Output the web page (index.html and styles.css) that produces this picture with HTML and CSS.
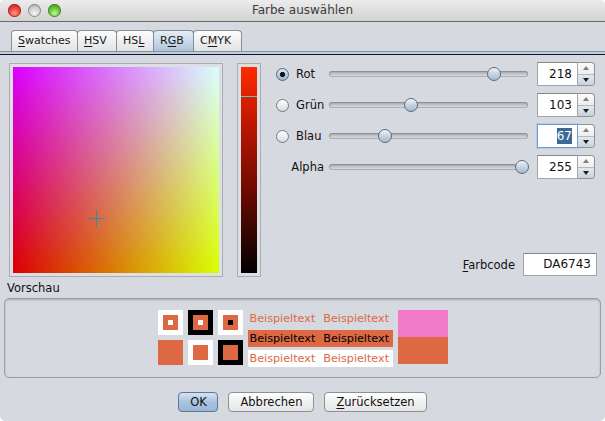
FILE: index.html
```html
<!DOCTYPE html>
<html>
<head>
<meta charset="utf-8">
<link rel="stylesheet" href="styles.css">
</head>
<body>
<div class="window">
  <div class="titlebar">
    <div class="lights">
      <span class="light red"></span>
      <span class="light gray"></span>
      <span class="light green"></span>
    </div>
    <div class="title">Farbe auswählen</div>
  </div>
  <div class="tabs">
    <div class="tab"><u>S</u>watches</div>
    <div class="tab"><u>H</u>SV</div>
    <div class="tab">HS<u>L</u></div>
    <div class="tab active">R<u>G</u>B</div>
    <div class="tab">C<u>M</u>YK</div>
  </div>
  <div class="band"></div>
  <div class="content">
    <div class="top">
      <div class="planebox">
        <div class="plane">
          <span class="cross-h"></span>
          <span class="cross-v"></span>
        </div>
      </div>
      <div class="barbox">
        <div class="bar"><span class="marker"></span></div>
      </div>
      <div class="controls">
        <div class="rows">
          <div class="row">
            <div class="sel"><span class="radio on"></span><span class="lbl">Rot</span></div>
            <div class="track"><span class="thumb" style="left:165px"></span></div>
            <div class="num">218</div>
            <div class="spin"><span class="up"></span><span class="down"></span></div>
          </div>
          <div class="row">
            <div class="sel"><span class="radio"></span><span class="lbl">Grün</span></div>
            <div class="track"><span class="thumb" style="left:82px"></span></div>
            <div class="num">103</div>
            <div class="spin"><span class="up"></span><span class="down"></span></div>
          </div>
          <div class="row">
            <div class="sel"><span class="radio"></span><span class="lbl">Blau</span></div>
            <div class="track"><span class="thumb" style="left:56px"></span></div>
            <div class="num focus"><span class="hl">67</span></div>
            <div class="spin"><span class="up"></span><span class="down"></span></div>
          </div>
          <div class="row">
            <div class="sel alpha"><span class="lbl">Alpha</span></div>
            <div class="track"><span class="thumb" style="left:193px"></span></div>
            <div class="num">255</div>
            <div class="spin"><span class="up"></span><span class="down"></span></div>
          </div>
        </div>
        <div class="code">
          <span class="codelbl"><u>F</u>arbcode</span>
          <div class="codefield">DA6743</div>
        </div>
      </div>
    </div>
    <div class="vlabel">Vorschau</div>
    <div class="preview">
      <div class="squares">
        <div class="sq white"><div class="in"><div class="dot white"></div></div></div>
        <div class="sq black"><div class="in"><div class="dot white"></div></div></div>
        <div class="sq white"><div class="in"><div class="dot black"></div></div></div>
        <div class="sq orange"></div>
        <div class="sq white"><div class="in"></div></div>
        <div class="sq black"><div class="in"></div></div>
      </div>
      <div class="texts">
        <div class="trow plain"><span>Beispieltext</span><span>Beispieltext</span></div>
        <div class="trow onorange"><span>Beispieltext</span><span>Beispieltext</span></div>
        <div class="trow onwhite"><span>Beispieltext</span><span>Beispieltext</span></div>
      </div>
      <div class="swatch">
        <div class="old"></div>
        <div class="new"></div>
      </div>
    </div>
    <div class="buttons">
      <div class="btn default">OK</div>
      <div class="btn">Abbrechen</div>
      <div class="btn"><u>Z</u>urücksetzen</div>
    </div>
  </div>
</div>
</body>
</html>
```

FILE: styles.css
```css
* { box-sizing: border-box; }
html, body { margin: 0; padding: 0; background: #ffffff; }
body {
  font-family: "DejaVu Sans", "Liberation Sans", sans-serif;
  font-size: 11.5px;
  color: #111;
}
.window {
  width: 605px;
  height: 421px;
  background: #d6d9e0;
  border-radius: 5px;
  overflow: hidden;
  display: flex;
  flex-direction: column;
}
u { text-decoration: underline; text-underline-offset: 2px; text-decoration-thickness: 1px; }

/* title bar */
.titlebar {
  height: 22px;
  flex: none;
  border-bottom: 1px solid #6a6a6a;
  background: linear-gradient(#ececec, #d2d2d2);
  position: relative;
  display: flex;
  align-items: center;
}
.lights { display: flex; gap: 7px; padding-left: 8px; }
.light {
  width: 13px; height: 13px; border-radius: 50%;
  display: block;
}
.light.red { background: radial-gradient(circle at 50% 70%, #ff9a8e 0, #f2453c 45%, #b8160f 100%); box-shadow: inset 0 0 0 1px #a3322b; }
.light.gray { background: radial-gradient(circle at 50% 70%, #f4f4f4 0, #cfcfcf 50%, #9e9e9e 100%); box-shadow: inset 0 0 0 1px #8e8e8e; }
.light.green { background: radial-gradient(circle at 50% 70%, #c5f59a 0, #6bc63a 45%, #2f8a14 100%); box-shadow: inset 0 0 0 1px #4a8a30; }
.title {
  position: absolute;
  left: 0; right: 0; top: 0; bottom: 0;
  text-align: center;
  font-size: 12px;
  line-height: 21px;
  color: #3c3c3c;
  pointer-events: none;
}

/* tabs */
.tabs {
  height: 30px;
  flex: none;
  padding: 8px 0 0 11px;
  display: flex;
  border-bottom: 1px solid #8c9096;
}
.tab {
  height: 21px;
  border: 1px solid #8e8e8e;
  border-bottom: none;
  border-radius: 4px 4px 0 0;
  background: linear-gradient(#fdfdfd, #e2e3e5);
  font-size: 11px;
  line-height: 20px;
  padding: 0 6px;
  margin-right: -1px;
  color: #1a1a1a;
}
.tab:nth-child(1) { width: 67px; }
.tab:nth-child(2) { width: 40px; }
.tab:nth-child(3) { width: 38px; }
.tab:nth-child(4) { width: 41px; }
.tab:nth-child(5) { width: 49px; }
.tab.active {
  background: linear-gradient(#e6eef6, #aec3d9);
  border-color: #7d8c9c;
  position: relative;
  z-index: 1;
}
.band {
  height: 3px;
  flex: none;
  background: #bcd0e5;
  border-bottom: 1px solid #121626;
}

/* content */
.content { flex: 1; display: flex; flex-direction: column; }
.top {
  display: flex;
  padding: 7px 8px 0 9px;
  height: 222px;
}
.planebox {
  margin-top: 1px;
  width: 214px; height: 214px;
  border: 1px solid #a9acb0;
  padding: 3px;
  background: #dcdfe4;
}
.plane {
  width: 206px; height: 206px;
  position: relative;
  background:
    linear-gradient(to right, #000000, #00ff00),
    linear-gradient(to bottom, #0000ff, #000000),
    #da0000;
  background-blend-mode: screen;
}
.cross-h {
  position: absolute; left: 75px; top: 151px;
  width: 17px; height: 1px; background: #2f8f9e;
}
.cross-v {
  position: absolute; left: 83px; top: 143px;
  width: 1px; height: 17px; background: #2f8f9e;
}
.barbox {
  margin: 1px 0 0 14px;
  width: 24px; height: 214px;
  border: 1px solid #a9acb0;
  padding: 3px;
  background: #dcdfe4;
}
.bar {
  width: 16px; height: 206px;
  position: relative;
  background: linear-gradient(#ff2a00, #c41800 25%, #7a0c00 55%, #000000);
}
.marker {
  position: absolute; left: 0; right: 0; top: 29px;
  height: 1px; background: #5cc4cc;
}
.controls {
  flex: 1;
  margin-left: 9px;
  display: flex;
  flex-direction: column;
  justify-content: space-between;
  padding-bottom: 1px;
}
.rows { display: flex; flex-direction: column; gap: 7px; }
.row { display: flex; align-items: center; height: 24px; }
.sel { width: 59px; display: flex; align-items: center; flex: none; }
.sel.alpha { justify-content: flex-end; padding-right: 5px; }
.lbl { font-size: 11.5px; }
.radio {
  width: 13px; height: 13px; border-radius: 50%;
  margin: 0 7px 0 6px;
  border: 1px solid #777a7e;
  background: linear-gradient(#ffffff, #d9dadc);
  flex: none;
}
.radio.on {
  border-color: #56687a;
  background:
    radial-gradient(circle, #151515 0, #151515 2.3px, transparent 2.9px),
    linear-gradient(#dde7f1, #9db4cb);
}
.track { width: 199px; height: 24px; position: relative; flex: none; }
.track::before {
  content: "";
  position: absolute; left: 0; right: 0; top: 9px;
  height: 6px; border-radius: 3px;
  background: linear-gradient(#9da1a7, #c9ccd1 60%, #e1e3e6);
  box-shadow: inset 0 0 0 1px rgba(110,115,122,0.45);
}
.thumb {
  position: absolute; top: 5px;
  width: 14px; height: 14px; margin-left: -7px;
  border-radius: 50%;
  border: 1px solid #5b6b7c;
  background: linear-gradient(#eef3f8, #c5d3e1 50%, #a7bacd);
}
.num {
  margin-left: 9px;
  width: 41px; height: 24px; flex: none;
  border: 1px solid #a3a5a8;
  border-top-color: #868889;
  background: #ffffff;
  text-align: right;
  padding-right: 5px;
  font-size: 12px;
  line-height: 22px;
}
.num.focus {
  border-color: #6f9bd0;
  box-shadow: 0 0 0 1px #b3cbe6;
}
.hl { background: #3c6a96; color: #ffffff; padding: 1px 0; }
.spin {
  width: 17px; height: 24px; flex: none;
  border: 1px solid #8f9296;
  border-left: none;
  border-radius: 0 4px 4px 0;
  background: linear-gradient(#fbfbfb, #dfe0e2);
  display: flex; flex-direction: column;
}
.spin span { flex: 1; display: flex; align-items: center; justify-content: center; }
.spin .up { border-bottom: 1px solid #b6b8bb; }
.spin .down { background: linear-gradient(#e4e9ef, #c8d1db); border-radius: 0 0 3px 0; }
.spin .up::before {
  content: ""; width: 0; height: 0;
  border-left: 3px solid transparent; border-right: 3px solid transparent;
  border-bottom: 4px solid #7c7f83;
}
.spin .down::before {
  content: ""; width: 0; height: 0;
  border-left: 3px solid transparent; border-right: 3px solid transparent;
  border-top: 4px solid #1e1e1e;
}
.code { display: flex; justify-content: flex-end; align-items: center; gap: 8px; }
.codelbl { font-size: 11.5px; }
.codefield {
  width: 74px; height: 23px;
  border: 1px solid #a3a5a8;
  border-top-color: #868889;
  background: #ffffff;
  text-align: right;
  padding-right: 5px;
  font-size: 12px;
  line-height: 21px;
}

/* preview */
.vlabel { padding: 4px 0 0 7px; line-height: 15px; height: 21px; font-size: 11.5px; }
.preview {
  margin: 0 4px;
  height: 80px;
  border: 1px solid #9a9da2;
  border-radius: 5px;
  box-shadow: inset 0 1px 2px rgba(0,0,0,0.22);
  display: flex;
  justify-content: center;
  align-items: flex-start;
  padding-top: 11px;
  gap: 5px;
}
.squares {
  display: grid;
  grid-template-columns: repeat(3, 25px);
  grid-auto-rows: 25px;
  gap: 5px;
}
.sq { width: 25px; height: 25px; display: flex; align-items: center; justify-content: center; }
.sq.white { background: #ffffff; }
.sq.black { background: #000000; }
.sq.orange { background: #dc6943; }
.in { width: 15px; height: 15px; background: #dc6943; display: flex; align-items: center; justify-content: center; }
.dot { width: 5px; height: 5px; }
.dot.white { background: #ffffff; }
.dot.black { background: #000000; }
.texts { display: flex; flex-direction: column; gap: 3px; width: 145px; }
.trow {
  height: 17px;
  display: flex;
  gap: 8px;
  padding: 0 2px;
  font-size: 11.2px;
  line-height: 17px;
  white-space: nowrap;
}
.trow.plain { color: #dc6943; }
.trow.onorange { background: #dc6943; color: #000000; }
.trow.onwhite { background: #ffffff; color: #dc6943; }
.swatch { width: 50px; display: flex; flex-direction: column; }
.swatch .old { height: 27px; background: #f27bc9; }
.swatch .new { height: 27px; background: #dc6943; }

/* buttons */
.buttons { display: flex; justify-content: center; gap: 10px; margin-top: 14px; }
.btn {
  height: 20px;
  border: 1px solid #8e9094;
  border-radius: 4px;
  background: linear-gradient(#ffffff, #f0f0f1 50%, #e4e5e7);
  font-size: 11.5px;
  line-height: 18px;
  padding: 0 11px;
  color: #111;
}
.btn.default {
  width: 40px;
  text-align: center;
  padding: 0;
  border-color: #5d7896;
  background: linear-gradient(#d5e3f1, #a9c3de 50%, #9ab7d6);
}
```
